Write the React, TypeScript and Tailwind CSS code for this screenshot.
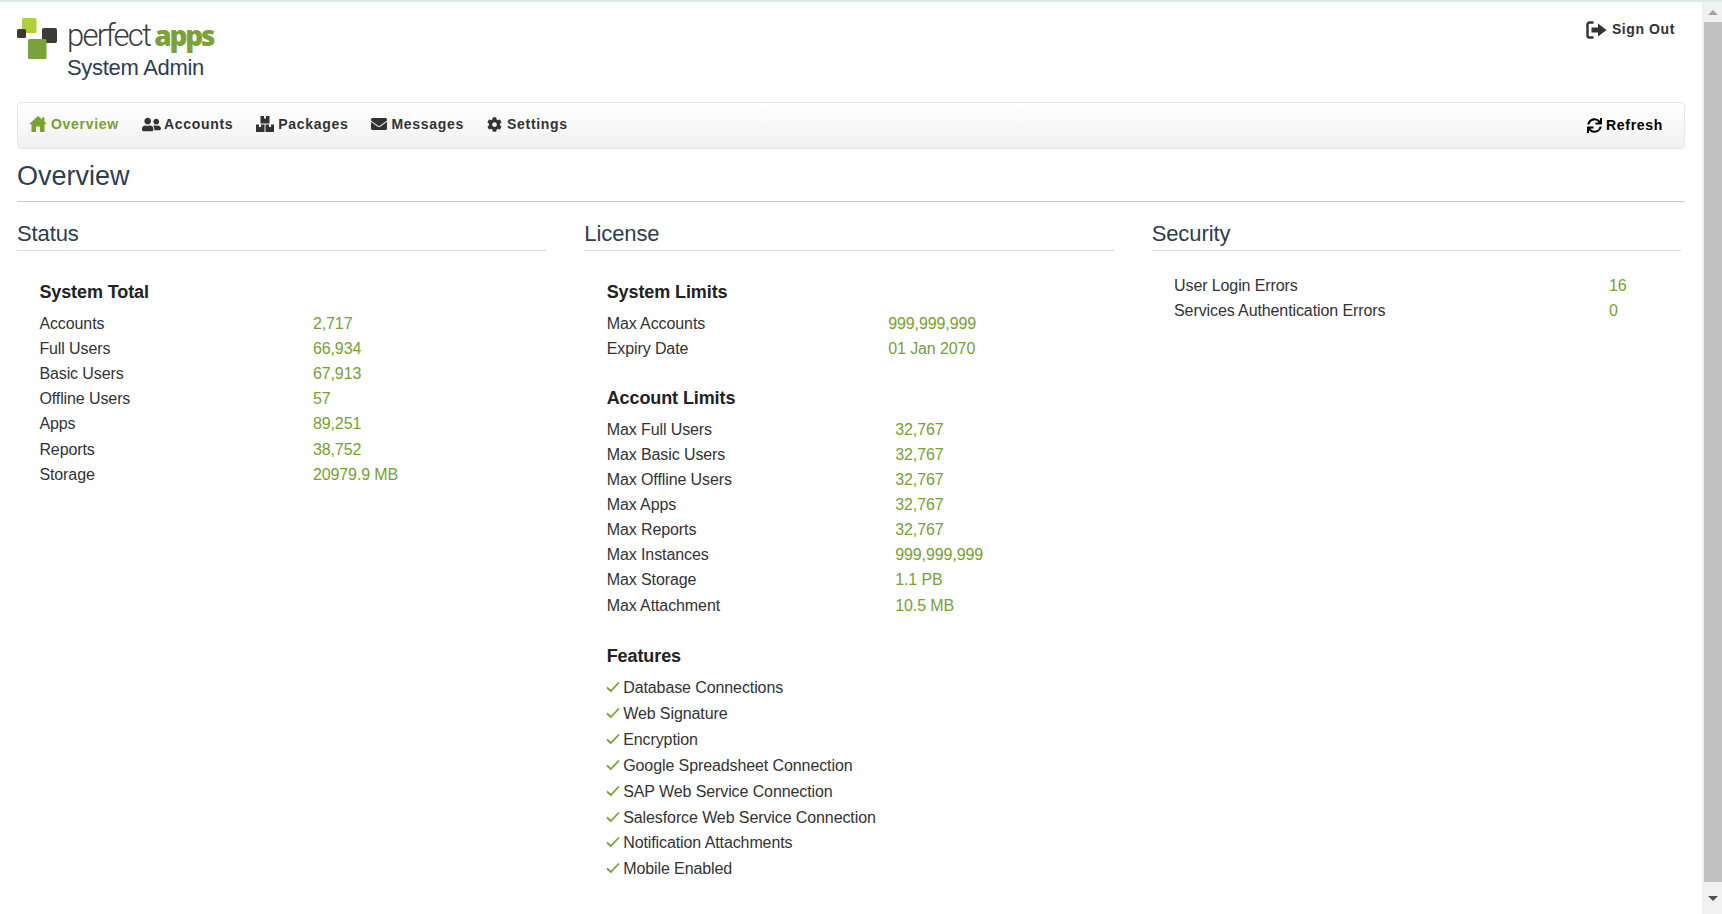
import { FaUserFriends, FaEnvelope, FaCog, FaSync } from "react-icons/fa";
import type { ReactNode } from "react";

const green = "text-[#76a22f]";

const statusRows = [
  ["Accounts", "2,717"],
  ["Full Users", "66,934"],
  ["Basic Users", "67,913"],
  ["Offline Users", "57"],
  ["Apps", "89,251"],
  ["Reports", "38,752"],
  ["Storage", "20979.9 MB"],
];

const systemLimits = [
  ["Max Accounts", "999,999,999"],
  ["Expiry Date", "01 Jan 2070"],
];

const accountLimits = [
  ["Max Full Users", "32,767"],
  ["Max Basic Users", "32,767"],
  ["Max Offline Users", "32,767"],
  ["Max Apps", "32,767"],
  ["Max Reports", "32,767"],
  ["Max Instances", "999,999,999"],
  ["Max Storage", "1.1 PB"],
  ["Max Attachment", "10.5 MB"],
];

const securityRows = [
  ["User Login Errors", "16"],
  ["Services Authentication Errors", "0"],
];

const features = [
  "Database Connections",
  "Web Signature",
  "Encryption",
  "Google Spreadsheet Connection",
  "SAP Web Service Connection",
  "Salesforce Web Service Connection",
  "Notification Attachments",
  "Mobile Enabled",
];

function Logo() {
  return (
    <svg width="42" height="44" viewBox="0 0 42 44" className="shrink-0">
      <rect x="5" y="1" width="14.500" height="15" rx="1.500" fill="#afd136" />
      <rect x="0" y="12" width="9" height="9" rx="1.500" fill="#3a3a3a" />
      <rect x="25" y="11" width="15" height="15" rx="2" fill="#3a3a3a" />
      <rect x="11" y="22" width="18.500" height="20" rx="1.500" fill="#7aa23c" />
    </svg>
  );
}

function HomeIcon() {
  return (
    <svg width="18" height="16" viewBox="0 0 18 16" fill="currentColor">
      <path d="M9 0 13 3.600V1.500H15.500V5.800L18 8.200H15.500V16H11V10.500H7V16H2.500V8.200H0Z" />
    </svg>
  );
}

function PackagesIcon() {
  return (
    <svg width="18" height="16" viewBox="0 0 18 16" fill="currentColor">
      <path d="M4.500 0H8V2.500H10V0H13.500V7.500H4.500Z" />
      <path d="M0 8.500H3V11H5V8.500H8.500V16H0Z" />
      <path d="M9.500 8.500H13V11H15V8.500H18V16H9.500Z" />
    </svg>
  );
}

function SignOutIcon() {
  return (
    <svg width="21" height="18" viewBox="0 0 21 18">
      <path d="M7.500 1.500H3.500A2 2 0 0 0 1.500 3.500v11A2 2 0 0 0 3.500 16.500H7.500" fill="none" stroke="currentColor" strokeWidth="2.400" />
      <path d="M5.500 6.500h6.500V2.500L20.500 9 12 15.500V11.500H5.500z" fill="currentColor" />
    </svg>
  );
}

function CheckIcon() {
  return (
    <svg width="14" height="12" viewBox="0 0 14 12" className="-mt-[2px] -ml-[1px] shrink-0">
      <path d="M1 6.500 4.800 10 13 1.500" fill="none" stroke="#76a22f" strokeWidth="1.800" />
    </svg>
  );
}

function NavItem({ icon, label, gap, active }: { icon: ReactNode; label: string; gap: string; active?: boolean }) {
  return (
    <a className={`flex items-center ${gap} ${active ? green : "text-[#333]"}`}>
      {icon}
      <span>{label}</span>
    </a>
  );
}

function KeyValues({ rows, labelWidth, rowHeight }: { rows: string[][]; labelWidth: string; rowHeight: string }) {
  return (
    <div>
      {rows.map(([label, value]) => (
        <div key={label} className={`flex items-center ${rowHeight}`}>
          <span className={labelWidth}>{label}</span>
          <span className={green}>{value}</span>
        </div>
      ))}
    </div>
  );
}

function Section({ title, children }: { title: string; children: ReactNode }) {
  return (
    <div className="pr-[38px]">
      <h2 className="border-b border-[#ddd] pb-[1px] text-[22px] leading-[30px] text-[#2c3e50]">{title}</h2>
      <div className="pl-[22.400px]">{children}</div>
    </div>
  );
}

function SubHeading({ children }: { children: ReactNode }) {
  return <h3 className="mb-[5px] h-[27px] text-[18px] leading-[27px] font-bold text-[#222]">{children}</h3>;
}

export default function App() {
  return (
    <div className="flex h-screen flex-col overflow-hidden border-t-2 border-[#dfe9e6] bg-white font-['Liberation_Sans',Arial,sans-serif] text-[16px] tracking-[-0.1px] text-[#333]">
      <div className="flex min-h-0 flex-1">
        <main className="min-w-0 flex-1 pr-[17px] pl-[17px]">
          {/* HEADER */}
          <div className="flex h-[100px] items-start justify-between">
            <div className="flex pt-[15px]">
              <Logo />
              <div className="ml-[8px]">
                <div className="flex h-[37px] items-center text-[31px] leading-[37px] tracking-[-1.800px]">
                  <span className="font-['Roboto'] font-light text-[#3d3d3d]">perfect</span>
                  <span className="ml-[4px] font-['Open_Sans'] text-[28px] font-extrabold tracking-[-2.200px] text-[#7aa23c]">apps</span>
                </div>
                <div className="mt-[1px] text-[22px] leading-[26px] tracking-[-0.3px] text-[#2c3e50]">System Admin</div>
              </div>
            </div>
            <a className="mt-[17px] mr-[10px] flex items-center gap-[5px] text-[14px] font-bold tracking-[0.6px] text-[#333]">
              <SignOutIcon />
              Sign Out
            </a>
          </div>

          {/* NAV */}
          <nav className="flex h-[47px] items-center justify-between rounded-[4px] border border-[#e7e7e7] bg-gradient-to-b from-white to-[#f1f1f1] px-[11px] pb-[3px] text-[14px] font-bold tracking-[0.7px]">
            <div className="flex items-center gap-[23px]">
              <NavItem active gap="gap-[4px]" icon={<HomeIcon />} label="Overview" />
              <NavItem gap="gap-[3px]" icon={<FaUserFriends size={19} />} label="Accounts" />
              <NavItem gap="gap-[4px]" icon={<PackagesIcon />} label="Packages" />
              <NavItem gap="gap-[4px]" icon={<FaEnvelope size={16} />} label="Messages" />
              <NavItem gap="gap-[5px]" icon={<FaCog size={15} />} label="Settings" />
            </div>
            <a className="mt-[2px] mr-[10px] flex items-center gap-[4px] text-black">
              <FaSync size={15} />
              Refresh
            </a>
          </nav>

          {/* TITLE */}
          <h1 className="mt-[9px] border-b border-[#ccc] pb-[7px] text-[27px] leading-[36px] tracking-normal text-[#2c3e50]">Overview</h1>

          {/* COLUMNS */}
          <div className="mt-[17px] grid w-[1702px] grid-cols-3">
            <Section title="Status">
              <div className="mt-[28px]">
                <SubHeading>System Total</SubHeading>
                <KeyValues rows={statusRows} labelWidth="w-[273.500px]" rowHeight="h-[25.200px]" />
              </div>
            </Section>

            <Section title="License">
              <div className="mt-[28px]">
                <SubHeading>System Limits</SubHeading>
                <KeyValues rows={systemLimits} labelWidth="w-[281.500px]" rowHeight="h-[25.200px]" />
              </div>
              <div className="mt-[24px]">
                <SubHeading>Account Limits</SubHeading>
                <KeyValues rows={accountLimits} labelWidth="w-[288.500px]" rowHeight="h-[25.100px]" />
              </div>
              <div className="mt-[25px]">
                <SubHeading>Features</SubHeading>
                <div>
                  {features.map((f) => (
                    <div key={f} className="flex h-[25.900px] items-center gap-[3.500px]">
                      <CheckIcon />
                      <span>{f}</span>
                    </div>
                  ))}
                </div>
              </div>
            </Section>

            <Section title="Security">
              <div className="mt-[22px]">
                <KeyValues rows={securityRows} labelWidth="w-[435px]" rowHeight="h-[25.200px]" />
              </div>
            </Section>
          </div>
        </main>

        {/* SCROLLBAR */}
        <div className="flex w-[20px] shrink-0 flex-col bg-[#f1f1f1] pl-[2px]">
          <div className="flex h-[20px] items-center justify-center">
            <div className="h-0 w-0 border-x-[5px] border-b-[5px] border-x-transparent border-b-[#a3a3a3]" />
          </div>
          <div className="h-[860px] bg-[#c1c1c1]" />
          <div className="flex flex-1 items-center justify-center">
            <div className="h-0 w-0 border-x-[5px] border-t-[5px] border-x-transparent border-t-[#505050]" />
          </div>
        </div>
      </div>
    </div>
  );
}
